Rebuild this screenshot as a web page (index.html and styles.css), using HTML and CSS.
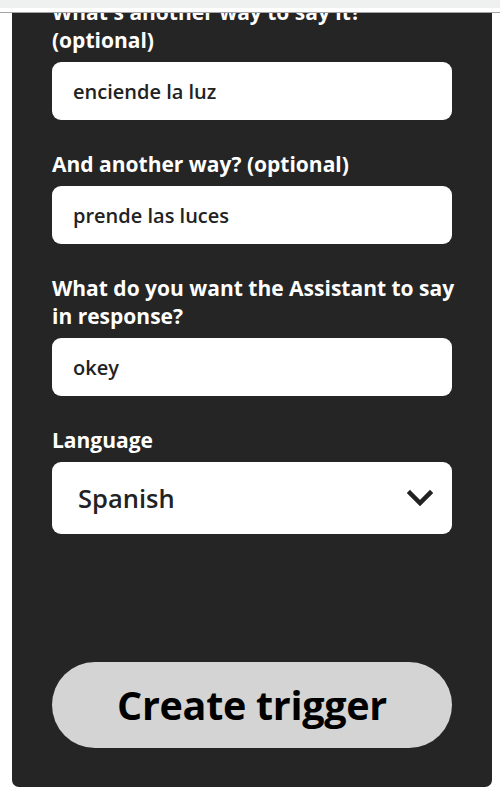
FILE: index.html
```html
<!DOCTYPE html>
<html>
<head>
<meta charset="utf-8">
<link rel="stylesheet" href="styles.css">
</head>
<body>
<div class="topbar"><div class="topbar-fill"></div></div>
<main class="panel">
  <div class="field">
    <label class="label">What's another way to say it? (optional)</label>
    <div class="input">enciende la luz</div>
  </div>
  <div class="field">
    <label class="label">And another way? (optional)</label>
    <div class="input">prende las luces</div>
  </div>
  <div class="field">
    <label class="label">What do you want the Assistant to say in response?</label>
    <div class="input">okey</div>
  </div>
  <div class="field">
    <label class="label">Language</label>
    <div class="select">
      <span class="select-value">Spanish</span>
      <svg class="chevron" width="26" height="18" viewBox="0 0 26 18"><path d="M3 4 L13 14 L23 4" fill="none" stroke="#222" stroke-width="4.5" stroke-linecap="square"/></svg>
    </div>
  </div>
  <button class="submit">Create trigger</button>
</main>
</body>
</html>
```
FILE: styles.css
```css
html, body {
  margin: 0;
  padding: 0;
  background: #ffffff;
}
body {
  font-family: "Open Sans", "Noto Sans", sans-serif;
}
.topbar {
  position: fixed;
  top: 0;
  left: 0;
  right: 0;
  height: 12px;
  background: #ffffff;
  border-bottom: 1px solid #a3a3a3;
  z-index: 10;
}
.topbar-fill {
  height: 8px;
  background: #eef1f0;
}
.panel {
  margin: 0 8px 0 12px;
  background: #252525;
  border-radius: 0 0 7px 7px;
  padding: 0 40px 39px;
  display: flex;
  flex-direction: column;
}
.field {
  display: flex;
  flex-direction: column;
  gap: 8px;
  margin-bottom: 30px;
}
.field:first-child {
  margin-top: -2px;
}
.label {
  color: #ffffff;
  font-weight: 700;
  font-size: 21px;
  line-height: 28px;
  margin-right: -9px;
}
.input {
  height: 58px;
  background: #ffffff;
  border-radius: 9px;
  padding: 0 21px;
  display: flex;
  align-items: center;
  color: #222222;
  font-size: 20px;
  font-weight: 600;
}
.select {
  height: 72px;
  background: #ffffff;
  border-radius: 9px;
  padding: 0 19px 0 26px;
  display: flex;
  align-items: center;
  justify-content: space-between;
  color: #222222;
  font-size: 25.5px;
  font-weight: 600;
}
.field:nth-child(4) {
  margin-bottom: 128px;
}
.submit {
  height: 86px;
  border: none;
  border-radius: 43px;
  background: #d4d4d4;
  color: #000000;
  font-family: "Open Sans", "Noto Sans", sans-serif;
  font-weight: 700;
  font-size: 39.5px;
  letter-spacing: -0.3px;
  padding: 0;
  margin: 0;
}
```
